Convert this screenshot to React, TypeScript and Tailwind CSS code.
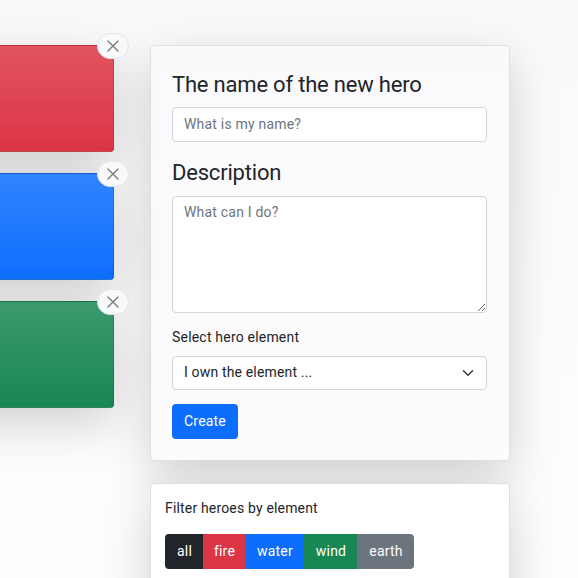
import React from 'react';

const heroes = [
  { id: 'fire', color: 'bg-[#dc3545]' },
  { id: 'water', color: 'bg-[#0d6efd]' },
  { id: 'wind', color: 'bg-[#198754]' },
];

const filters = [
  { label: 'all', style: 'bg-[#212529] w-[38px] rounded-l' },
  { label: 'fire', style: 'bg-[#dc3545] w-[42px]' },
  { label: 'water', style: 'bg-[#0d6efd] w-[59px]' },
  { label: 'wind', style: 'bg-[#198754] w-[53px]' },
  { label: 'earth', style: 'bg-[#6c757d] w-[57px] rounded-r' },
];

function HeroCard({ color }: { color: string }) {
  return (
    <div
      className={`relative h-[107px] w-full rounded border border-black/15 bg-linear-to-b from-white/15 to-white/0 shadow-[0_16px_48px_rgba(0,0,0,0.175)] ${color}`}
    >
      <button
        aria-label="Remove"
        className="absolute -top-[13px] -right-[16px] flex h-[26px] w-8 items-center justify-center rounded-full border border-[#e3e6e9] bg-[#f8f9fa] pr-px"
      >
        <svg width="12" height="12" viewBox="0 0 12 12" fill="none" stroke="#747677" strokeWidth="1.3" strokeLinecap="round">
          <path d="M1 1l10 10M11 1L1 11" />
        </svg>
      </button>
    </div>
  );
}

export default function App() {
  return (
    <div className="flex h-[578px] w-[578px] items-start overflow-hidden bg-linear-to-b from-[#f9f9fb] via-[#fdfbfc] to-[#fefdfc] pt-[45px] font-[Roboto,sans-serif] text-sm leading-[21px] tracking-[0.2px] text-[#212529]">
      <div className="-ml-[206px] flex w-80 shrink-0 flex-col gap-[21px]">
        {heroes.map((h) => (
          <HeroCard key={h.id} color={h.color} />
        ))}
      </div>

      <div className="ml-9 flex w-[360px] shrink-0 flex-col gap-[22px]">
        <form className="flex h-[416px] flex-col rounded border border-[#dfe0e4] bg-linear-to-b from-[#fafafc] to-[#fdfbfc] pt-[25px] pr-[22px] pl-[21px] shadow-[0_16px_48px_rgba(0,0,0,0.175)]">
          <label className="text-[22px] leading-7 tracking-[-0.2px]">The name of the new hero</label>
          <input
            placeholder="What is my name?"
            className="mt-2 h-[35px] rounded border border-[#ced4da] bg-white px-[11px] pb-px placeholder:text-[#6c757d]"
          />
          <label className="mt-[17px] text-[22px] leading-7 tracking-[-0.2px]">Description</label>
          <textarea
            placeholder="What can I do?"
            className="mt-[9px] h-[117px] shrink-0 resize rounded border border-[#ced4da] bg-white px-[11px] py-[5px] placeholder:text-[#6c757d]"
          />
          <label className="mt-[14px]">Select hero element</label>
          <div className="mt-2 flex h-[34px] items-center justify-between rounded border border-[#ced4da] bg-white pr-3 pb-px pl-[11px]">
            <span className="tracking-[0.16px]">I own the element ...</span>
            <svg width="12" height="12" viewBox="0 0 16 16" fill="none" stroke="#343a40" strokeWidth="2" strokeLinecap="round" strokeLinejoin="round">
              <path d="m2 5 6 6 6-6" />
            </svg>
          </div>
          <button type="button" className="mt-[14px] h-[35px] w-[66px] rounded bg-[#0d6efd] text-white">
            Create
          </button>
        </form>

        <section className="h-[150px] rounded border border-[#dfdfe1] bg-white px-[14px] pt-[14px] shadow-[0_16px_48px_rgba(0,0,0,0.175)]">
          <p className="tracking-[0.17px]">Filter heroes by element</p>
          <div className="mt-[15px] flex text-white">
            {filters.map((f) => (
              <button key={f.label} className={`h-[35px] pl-px ${f.style}`}>
                {f.label}
              </button>
            ))}
          </div>
        </section>
      </div>
    </div>
  );
}
